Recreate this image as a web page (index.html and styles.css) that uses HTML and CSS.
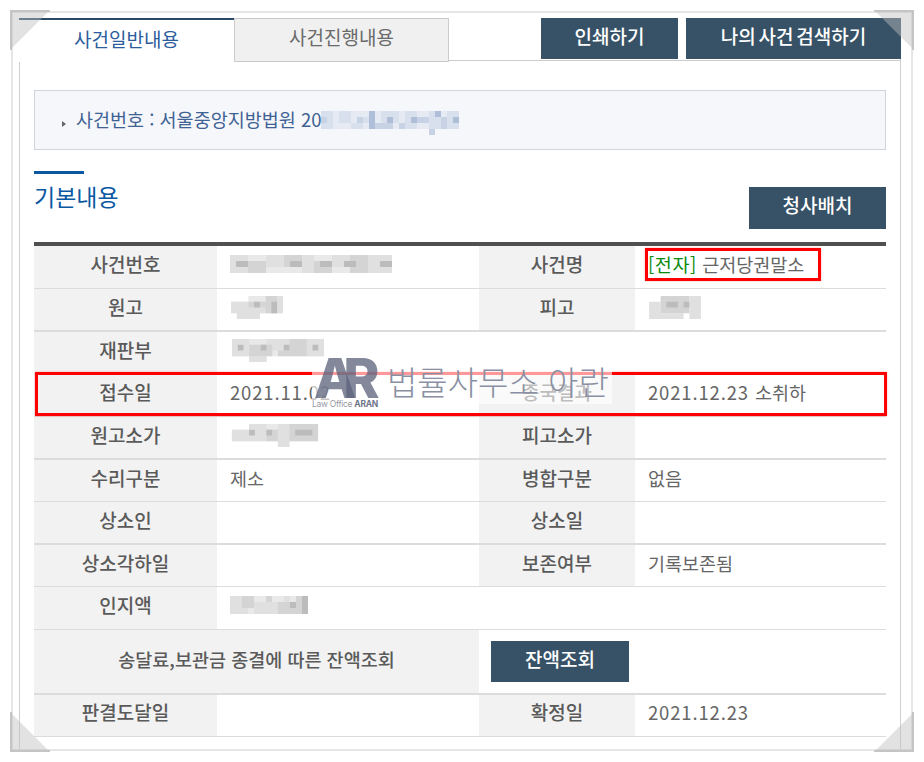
FILE: index.html
```html
<!DOCTYPE html>
<html lang="ko">
<head>
<meta charset="utf-8">
<title>사건일반내용</title>
<link rel="stylesheet" href="styles.css">
</head>
<body>
<div class="page">
  <div class="outer">
    <div class="inner">
      <div class="tabrow">
        <div class="tab tab-on">사건일반내용</div>
        <div class="tab tab-off">사건진행내용</div>
        <div class="tabbtns">
          <a class="btn btn-print">인쇄하기</a>
          <a class="btn btn-search">나의 사건 검색하기</a>
        </div>
      </div>
      <div class="content">
        <div class="casebox">
          <i class="arrow"></i>
          <span>사건번호 : 서울중앙지방법원 20</span>
          <svg class="mos mos-case" viewBox="0 0 23 4" width="138" height="24">
            <path class="b0" d="M0 0h23v3h-23zM18 3h1v1h-1z"/>
            <path class="b1" d="M0 0h2v3h-2zM3 0h2v2h-2zM7 1h2v1h-2zM10 0h3v2h-3zM14 0h2v3h-2zM18 0h2v3h-2zM21 0h2v3h-2zM5 2h2v1h-2z"/>
            <path class="b2" d="M0 1h1v1h-1zM6 1h1v1h-1zM9 2h3v1h-3zM13 2h1v1h-1zM16 1h2v1h-2zM20 1h1v2h-1zM18 3h1v1h-1z"/>
            <path class="b3" d="M8 0h1v3h-1zM11 1h1v1h-1zM15 1h1v1h-1zM19 0h1v1h-1zM22 1h1v1h-1z"/>
          </svg>
        </div>
        <div class="sechead">
          <div>
            <div class="secbar"></div>
            <h2 class="sectitle">기본내용</h2>
          </div>
          <a class="btn btn-court">청사배치</a>
        </div>
        <table class="info">
          <colgroup><col class="c1"><col class="c2"><col class="c3"><col class="c4"></colgroup>
          <tr class="h43 up">
            <th>사건번호</th>
            <td><svg class="mos" viewBox="0 0 27 3" width="162" height="18"><path class="g0" d="M0 0h27v3h-27z"/><path class="g1" d="M0 0h3v3h-3zM6 0h3v2h-3zM12 0h2v3h-2zM17 0h3v2h-3zM23 0h4v3h-4z"/><path class="g2" d="M3 1h3v2h-3zM9 0h3v2h-3zM14 1h3v2h-3zM20 0h3v3h-3z"/><path class="g3" d="M1 1h2v1h-2zM10 1h2v1h-2zM15 1h2v1h-2zM19 1h2v1h-2zM25 1h2v1h-2z"/></svg></td>
            <th>사건명</th>
            <td><span class="tag">[전자]</span> 근저당권말소</td>
          </tr>
          <tr class="h43 thick">
            <th>원고</th>
            <td><svg class="mos" viewBox="0 0 9 4" width="54" height="23"><path class="g0" d="M0 1h9v2h-9zM1 3h4v1h-4zM3 0h6v1h-6z"/><path class="g1" d="M0 1h3v2h-3zM3 2h3v1h-3zM8 0h1v3h-1zM1 3h4v1h-4z"/><path class="g2" d="M3 1h3v1h-3zM6 0h2v3h-2z"/><path class="g3" d="M4 1h1v1h-1zM7 1h1v2h-1z"/></svg></td>
            <th>피고</th>
            <td><svg class="mos" viewBox="0 0 9 4" width="54" height="23"><path class="g1" d="M0 1h2v3h-2zM2 3h4v1h-4zM7 0h2v4h-2z"/><path class="g2" d="M2 0h5v3h-5z"/><path class="g3" d="M3 1h2v1h-2zM6 1h1v1h-1z"/></svg></td>
          </tr>
          <tr class="h42">
            <th>재판부</th>
            <td colspan="3"><svg class="mos" viewBox="0 0 16 4" width="96" height="23"><path class="g0" d="M0 0h16v3h-16zM3 3h3v1h-3z"/><path class="g1" d="M0 0h3v3h-3zM6 0h4v2h-4zM13 0h3v3h-3zM3 3h3v1h-3z"/><path class="g2" d="M3 1h4v2h-4zM8 2h5v1h-5zM10 0h3v2h-3z"/><path class="g3" d="M1 1h1v1h-1zM5 1h1v1h-1zM9 1h1v1h-1zM14 1h1v1h-1z"/></svg></td>
          </tr>
          <tr class="h43 up">
            <th>접수일</th>
            <td class="num">2021.11.02</td>
            <th>종국결과</th>
            <td class="num">2021.12.23 <span class="plain">소취하</span></td>
          </tr>
          <tr class="h43 thick">
            <th>원고소가</th>
            <td><svg class="mos" viewBox="0 0 15 4" width="90" height="23"><path class="g0" d="M0 1h15v2h-15zM3 0h12v1h-12zM8 3h2v1h-2z"/><path class="g1" d="M0 1h3v2h-3zM3 0h3v3h-3zM8 0h2v4h-2z"/><path class="g2" d="M6 1h2v2h-2zM10 0h5v3h-5z"/><path class="g3" d="M3 1h1v1h-1zM6 1h1v1h-1zM11 1h3v1h-3z"/></svg></td>
            <th>피고소가</th>
            <td></td>
          </tr>
          <tr class="h42">
            <th>수리구분</th>
            <td>제소</td>
            <th>병합구분</th>
            <td>없음</td>
          </tr>
          <tr class="h43 thick">
            <th>상소인</th>
            <td></td>
            <th>상소일</th>
            <td></td>
          </tr>
          <tr class="h42">
            <th>상소각하일</th>
            <td></td>
            <th>보존여부</th>
            <td>기록보존됨</td>
          </tr>
          <tr class="h43 up">
            <th>인지액</th>
            <td colspan="3"><svg class="mos" viewBox="0 0 13 3" width="78" height="18"><path class="g0" d="M0 0h13v3h-13z"/><path class="g1" d="M0 0h3v3h-3zM4 1h4v2h-4zM9 0h1v3h-1z"/><path class="g2" d="M2 0h2v2h-2zM6 0h1v1h-1zM8 1h3v2h-3zM11 0h2v3h-2z"/><path class="g3" d="M10 1h1v1h-1zM12 0h1v3h-1z"/></svg></td>
          </tr>
          <tr class="h65 thick">
            <th colspan="2" class="long">송달료,보관금 종결에 따른 잔액조회</th>
            <td colspan="2" class="btncell"><a class="btn btn-balance">잔액조회</a></td>
          </tr>
          <tr class="h42 up">
            <th>판결도달일</th>
            <td></td>
            <th>확정일</th>
            <td class="num">2021.12.23</td>
          </tr>
        </table>
      </div>
    </div>
  </div>

  <div class="mark mark-name"></div>
  <div class="mark mark-row"></div>

  <div class="wm">
    <div class="wm-logo">
      <div class="wm-ar">AR</div>
      <div class="wm-law">Law Office <b>ARAN</b></div>
    </div>
    <div class="wm-name">법률사무소 아란</div>
  </div>

  <svg class="corner tl" viewBox="0 0 40 40" width="40" height="40"><polygon class="cfill" points="0,0 40,0 0,40"/><polyline class="cedge" points="1,40 1,1 40,1"/></svg>
  <svg class="corner tr" viewBox="0 0 40 40" width="40" height="40"><polygon class="cfill" points="0,0 40,0 0,40"/><polyline class="cedge" points="1,40 1,1 40,1"/></svg>
  <svg class="corner bl" viewBox="0 0 40 40" width="40" height="40"><polygon class="cfill" points="0,0 40,0 0,40"/><polyline class="cedge" points="1,40 1,1 40,1"/></svg>
  <svg class="corner br" viewBox="0 0 40 40" width="40" height="40"><polygon class="cfill" points="0,0 40,0 0,40"/><polyline class="cedge" points="1,40 1,1 40,1"/></svg>
</div>
</body>
</html>
```
FILE: styles.css
```css
* { box-sizing: border-box; }
html, body { margin: 0; padding: 0; background: #fff; }
body {
  font-family: "Noto Sans CJK KR", "Noto Sans", sans-serif;
  color: #666;
  font-size: 18px;
}
.page { position: relative; width: 924px; height: 762px; overflow: hidden; }

.outer {
  margin: 11px 0 0 11px;
  width: 902px;
  height: 740px;
  border: 2px solid #e6e6e6;
  padding: 5px 10px 0 6px;
}
.inner {
  height: 100%;
  border-left: 1px solid #cfcfcf;
  border-right: 1px solid #cfcfcf;
}

.tabrow {
  display: flex;
  height: 43px;
  margin: 0 -1px;
  border-bottom: 1px solid #ccc;
}
.tab {
  width: 215px;
  text-align: center;
  font-size: 19px;
  line-height: 38px;
}
.tab-on {
  height: 44px;
  border-top: 2px solid #2b4a68;
  background: #fff;
  color: #2c5c9c;
}
.tab-off {
  height: 44px;
  border: 1px solid #ccc;
  background: #f0f0f0;
  color: #6a6a6a;
  line-height: 35px;
}
.tabbtns { margin-left: auto; display: flex; gap: 8px; }

.btn {
  display: block;
  background: #375267;
  color: #fff;
  text-align: center;
  font-size: 19px;
  font-weight: 500;
}
.btn-print { width: 137px; height: 41px; line-height: 36px; }
.btn-search { width: 215px; height: 41px; line-height: 36px; word-spacing: -2.5px; }
.btn-court { width: 137px; height: 42px; line-height: 35px; margin-top: 16px; }
.btn-balance { width: 138px; height: 41px; line-height: 36px; }

.content { padding: 0 14px; }
.casebox {
  display: flex;
  align-items: center;
  margin-top: 29px;
  height: 60px;
  padding: 0 0 3px 27px;
  background: #f6f7fb;
  border: 1px solid #d2d4dc;
  color: #3f6294;
  font-size: 18.5px;
}
.arrow {
  width: 0;
  height: 0;
  margin: 10px 10px 0 0;
  border-style: solid;
  border-width: 3.5px 0 3.5px 4px;
  border-color: transparent transparent transparent #666;
}
.mos { display: block; filter: blur(0.5px); }
.mos-case { margin-top: 8px; }
.b0 { fill: #e6eaf3; }
.b1 { fill: #d8dfed; }
.b2 { fill: #c8d2e5; }
.b3 { fill: #b0bfd9; }
.g0 { fill: #e9e9e9; }
.g1 { fill: #e0e0e0; }
.g2 { fill: #d4d4d4; }
.g3 { fill: #bcbcbc; }

.sechead {
  display: flex;
  justify-content: space-between;
  align-items: flex-start;
  margin-top: 21px;
}
.secbar { width: 50px; height: 3px; background: #0b58a2; }
.sectitle {
  margin: 6px 0 0;
  font-size: 23px;
  line-height: 32px;
  font-weight: 400;
  color: #0b58a2;
}

.info {
  width: 852px;
  margin-top: 13px;
  table-layout: fixed;
  border-collapse: separate;
  border-spacing: 0;
  border-top: 4px solid #505050;
}
.c1 { width: 183px; }
.c2 { width: 262px; }
.c3 { width: 156px; }
.c4 { width: 251px; }
.info th, .info td {
  padding: 0 0 5px 0;
  border-bottom: 1px solid #dcdcdc;
  font-size: 18.5px;
  line-height: 24px;
}
.info th {
  background: #f2f2f2;
  color: #5a5a5a;
  font-size: 19px;
  font-weight: 500;
  text-align: center;
}
.info td { padding-left: 13px; color: #666; }
.info .up th, .info .up td { padding-bottom: 7px; }
.info .thick th, .info .thick td { border-bottom-width: 2px; }
.h42 { height: 42px; }
.h43 { height: 43px; }
.h65 { height: 65px; }
.info th.long { font-size: 18.5px; }
.info .btncell { padding: 0 0 0 12px; }
.info .num { letter-spacing: 0.85px; }
.plain { letter-spacing: 0; }
.tag { color: #0a8a0a; letter-spacing: 0.6px; }

.mark {
  position: absolute;
  border: 3px solid #ff0000;
  box-shadow: 0 0 2px rgba(255, 90, 90, 0.5);
}
.mark-name { left: 645px; top: 248px; width: 176px; height: 33px; }
.mark-row { left: 35px; top: 372px; width: 852px; height: 44px; }

.wm {
  position: absolute;
  left: 312px;
  top: 357px;
  width: 300px;
  height: 47px;
  display: flex;
  background: rgba(255, 255, 255, 0.6);
}
.wm-logo { position: relative; width: 75px; }
.wm-ar {
  position: absolute;
  left: 2px;
  top: -9px;
  font-family: "Inter", "Liberation Sans", sans-serif;
  font-weight: 800;
  font-size: 55px;
  line-height: 60px;
  letter-spacing: -13px;
  color: rgba(90, 97, 122, 0.75);
}
.wm-law {
  position: absolute;
  left: 0;
  top: 42px;
  font-family: "Inter", "Liberation Sans", sans-serif;
  font-size: 8.5px;
  line-height: 10px;
  letter-spacing: -0.3px;
  white-space: nowrap;
  color: #9a9aa4;
}
.wm-law b { color: #6e7488; }
.wm-name {
  font-size: 33px;
  font-weight: 300;
  line-height: 48px;
  color: #8a90a3;
  white-space: nowrap;
}

.corner { position: absolute; }
.cfill { fill: rgba(190, 190, 190, 0.45); }
.cedge { fill: none; stroke: rgba(190, 190, 190, 0.8); stroke-width: 2; }
.tl { left: 10px; top: 10px; }
.tr { left: 874px; top: 10px; transform: scaleX(-1); }
.bl { left: 10px; top: 712px; transform: scaleY(-1); }
.br { left: 874px; top: 712px; transform: scale(-1, -1); }
```
